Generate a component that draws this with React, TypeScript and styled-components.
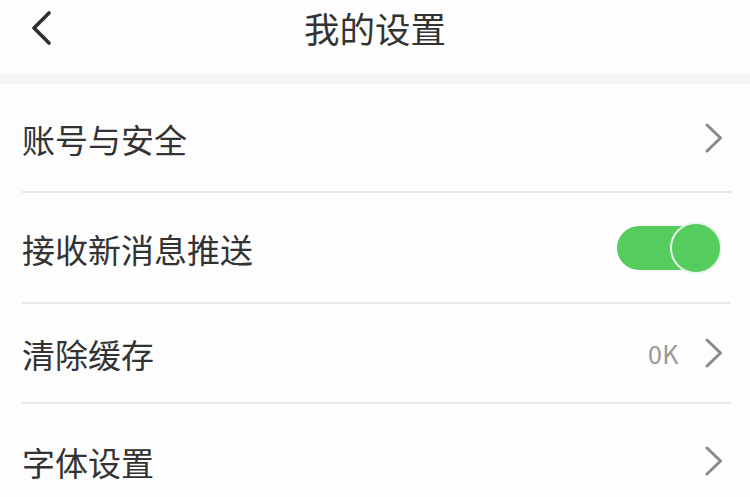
import React, { FunctionComponent } from 'react';
import styled, { createGlobalStyle } from 'styled-components';

const GlobalStyle = createGlobalStyle`
  html, body {
    margin: 0;
    padding: 0;
    background: #fdfdfd;
  }
  body {
    font-family: "Noto Sans CJK SC", "Noto Sans", sans-serif;
    color: #333;
  }
`;

type RowStyleProps = {
  rowHeight: number;
  last?: boolean;
};

const Page = styled.div`
    width: 750px;
    min-height: 497px;
    background: #fdfdfd;
    overflow: hidden;
  `,
  Header = styled.header`
    height: 73px;
    display: grid;
    grid-template-columns: 1fr auto 1fr;
    align-items: center;
    padding: 0 0 17px 30px;
    box-sizing: border-box;
  `,
  BackButton = styled.button`
    justify-self: start;
    display: flex;
    align-items: center;
    border: 0;
    padding: 0;
    background: none;
    cursor: pointer;
  `,
  Title = styled.h1`
    margin: 0 0 0 -30px;
    font-size: 35.5px;
    font-weight: 400;
    line-height: 1;
    color: #333;
    letter-spacing: 0;
  `,
  Band = styled.div`
    height: 11px;
    background: #f6f6f6;
  `,
  List = styled.ul`
    list-style: none;
    margin: 0;
    padding: 0 19px 0 22px;
  `,
  Row = styled.li`
    height: ${(props: RowStyleProps) => props.rowHeight}px;
    display: flex;
    align-items: center;
    justify-content: space-between;
    border-bottom: ${(props: RowStyleProps) => (props.last ? '0' : '2px solid #e8e8e8')};
    box-sizing: border-box;
  `,
  Label = styled.span`
    font-size: 33px;
    line-height: 1;
    color: #333;
    padding-top: 3px;
  `,
  Trailing = styled.div`
    display: flex;
    align-items: center;
    gap: 26px;
  `,
  Value = styled.span`
    font-size: 25px;
    color: #999;
    line-height: 1;
    letter-spacing: 0.5px;
  `,
  ChevronBox = styled.span`
    display: flex;
    margin-right: 8px;
  `,
  Toggle = styled.div`
    position: relative;
    width: 105px;
    height: 52px;
    margin-right: 9px;
    margin-top: 1px;
  `,
  Track = styled.div`
    position: absolute;
    left: 0;
    top: 4px;
    width: 102px;
    height: 44px;
    border-radius: 22px;
    background: #55cc5e;
  `,
  Thumb = styled.div`
    position: absolute;
    right: 0;
    top: 0;
    width: 52px;
    height: 52px;
    border-radius: 50%;
    box-sizing: border-box;
    background: #55cc5e;
    border: 2px solid #e9f7ea;
  `;

const Chevron: FunctionComponent = () => (
  <ChevronBox>
    <svg width="18" height="30" viewBox="0 0 18 30" fill="none">
      <path d="M2 2 L15.5 15 L2 28" stroke="#8a8a8a" strokeWidth="3" strokeLinecap="round" strokeLinejoin="round" />
    </svg>
  </ChevronBox>
);

const App: FunctionComponent = () => {
  return (
    <Page>
      <GlobalStyle />
      <Header>
        <BackButton aria-label="返回">
          <svg width="22" height="34" viewBox="0 0 22 34" fill="none">
            <path d="M19 2 L4 17 L19 32" stroke="#2f2f2f" strokeWidth="3.6" strokeLinecap="round" strokeLinejoin="round" />
          </svg>
        </BackButton>
        <Title>我的设置</Title>
        <span />
      </Header>
      <Band />
      <List>
        <Row rowHeight={109}>
          <Label>账号与安全</Label>
          <Chevron />
        </Row>
        <Row rowHeight={111}>
          <Label>接收新消息推送</Label>
          <Toggle>
            <Track />
            <Thumb />
          </Toggle>
        </Row>
        <Row rowHeight={100}>
          <Label>清除缓存</Label>
          <Trailing>
            <Value>0K</Value>
            <Chevron />
          </Trailing>
        </Row>
        <Row rowHeight={114} last>
          <Label>字体设置</Label>
          <Chevron />
        </Row>
      </List>
    </Page>
  );
};

export default App;
